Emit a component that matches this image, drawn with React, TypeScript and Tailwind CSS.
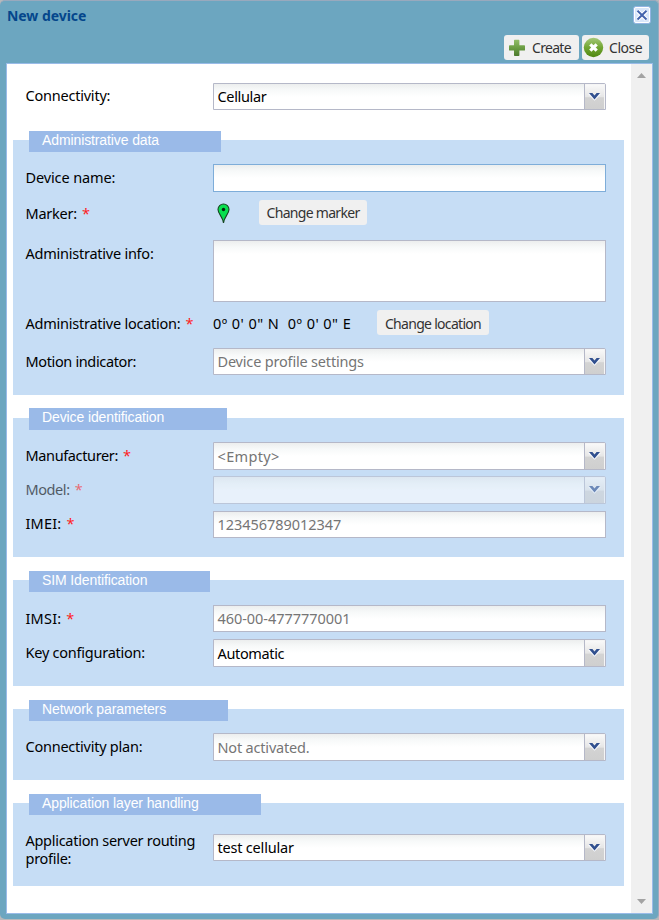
import React from "react";

const tahoma = "font-['Noto_Sans','Liberation_Sans',sans-serif]";

function Star() {
  return <span className="ml-[5px] text-[#ff2020]">*</span>;
}

function Row({ label, required, className = "", labelClass = "", children }: {
  label: React.ReactNode;
  required?: boolean;
  className?: string;
  labelClass?: string;
  children: React.ReactNode;
}) {
  return (
    <div className={`flex items-start ${className}`}>
      <div className={`w-[187.500px] shrink-0 whitespace-nowrap leading-[18px] ${labelClass || "pt-[4px] tracking-[-0.240px]"}`}>
        <span>{label}</span>
        {required && <Star />}
      </div>
      {children}
    </div>
  );
}

const fieldFill = "bg-white bg-[linear-gradient(#eceeee_0px,#f7f9f9_6px,#ffffff_13px)]";

function Field({ text, className = "h-[27px]", tone = "text-[#757575]", border = "border-[#b5b8c8]" }: {
  text?: React.ReactNode;
  className?: string;
  tone?: string;
  border?: string;
}) {
  return (
    <div className={`flex w-[393px] items-center whitespace-nowrap border pl-[3.500px] pt-px tracking-[-0.050px] ${fieldFill} ${border} ${tone} ${className}`}>
      {text}
    </div>
  );
}

function Select({ text, className = "h-[27px]", tone = "text-[#757575] tracking-[-0.180px]" }: {
  text?: React.ReactNode;
  className?: string;
  tone?: string;
}) {
  return (
    <div className={`flex w-[393px] overflow-hidden rounded-tr-[2px] border border-[#b5b8c8] ${fieldFill} ${className}`}>
      <div className={`flex flex-1 items-center whitespace-nowrap pl-[3.500px] pt-px ${tone}`}>{text}</div>
      <div className="flex w-[21px] border-l border-[#b5b8c8] bg-[linear-gradient(#fafafa,#e6e6e6_50%,#d3d3d3_55%,#cfcfcf)] pl-[3px] pt-[8px] shadow-[inset_-1px_1px_0_#f5f5f5]">
        <svg width="13" height="9" viewBox="0 0 13 9" className="shrink-0">
          <path d="M0 2h4l2.500 2L9 2h4L6.500 8.800z" fill="#f6f8fc" />
          <path d="M1 1h3.400l2.100 2.400L8.600 1H12L6.500 7.400z" fill="#31508f" />
        </svg>
      </div>
    </div>
  );
}

function Section({ title, className, legendClass, children }: {
  title: string;
  className: string;
  legendClass: string;
  children: React.ReactNode;
}) {
  return (
    <section className={`ml-[6px] flex w-[611px] flex-col bg-[#c6ddf5] pl-[12.500px] ${className}`}>
      <h2 className={`ml-[3.500px] shrink-0 bg-[#9abae8] pl-[13px] font-['Liberation_Sans',Arial,sans-serif] text-[14px] leading-[19px] tracking-[-0.110px] text-white ${legendClass}`}>
        {title}
      </h2>
      {children}
    </section>
  );
}

function Button({ children, className = "" }: { children: React.ReactNode; className?: string }) {
  return (
    <button className={`flex h-[25px] items-center whitespace-nowrap rounded-[3px] bg-[#f0f0f0] text-[14px] tracking-[-0.700px] text-[#333333] ${className}`}>
      {children}
    </button>
  );
}

export default function App() {
  return (
    <div className="h-[920px] w-[659px] bg-[#b7b9bb]">
      <div className={`flex h-[919px] w-[659px] flex-col rounded-[5px] border-t border-r border-[#99a9bd] bg-[#6ca6c0] text-[14.500px] text-black ${tahoma}`}>
        <header className="flex h-[34px] shrink-0 items-start justify-between pl-[7px] pr-[7px]">
          <h1 className="pt-[5px] text-[14px] font-bold leading-[20px] tracking-[-0.050px] text-[#04468c]">New device</h1>
          <svg width="18" height="18" viewBox="0 0 18 18" className="mt-[5px]">
            <rect x=".5" y=".5" width="17" height="17" rx="2.500" fill="#d8e6fa" stroke="#92b4e2" />
            <rect x="1.500" y="1.500" width="15" height="15" rx="1.500" fill="none" stroke="#fff" />
            <path d="M4.500 5l9 8.500M13.500 5l-9 8.500" stroke="#fff" strokeWidth="4" />
            <path d="M4.500 4.700l9 8.800M13.500 4.700l-9 8.800" stroke="#4464ad" strokeWidth="2" />
          </svg>
        </header>
        <div className="flex h-[28px] shrink-0 justify-end gap-[3px] pr-[9px]">
          <Button className="w-[75px] pl-[4px]">
            <svg width="18" height="18" viewBox="0 0 18 18">
              <defs>
                <linearGradient id="plus" x2="0" y2="1"><stop stopColor="#91bd68" /><stop offset=".5" stopColor="#6b9d43" /><stop offset="1" stopColor="#4b792d" /></linearGradient>
              </defs>
              <path d="M6 1.500q0-.7.7-.7h4q.7 0 .7.700v4.700h4.900q.7 0 .7.700v4q0 .7-.7.700h-4.900v4.700q0 .7-.7.700h-4q-.7 0-.7-.7v-4.700H1.700q-.7 0-.7-.7v-4q0-.7.7-.7H6z" fill="url(#plus)" />
            </svg>
            <span className="ml-[6px]">Create</span>
          </Button>
          <Button className="w-[67px] pl-[1px]">
            <svg width="21" height="21" viewBox="0 0 21 21">
              <defs>
                <linearGradient id="ball" x2="0" y2="1"><stop stopColor="#a5c878" /><stop offset=".5" stopColor="#72a633" /><stop offset="1" stopColor="#4f8710" /></linearGradient>
              </defs>
              <circle cx="10.500" cy="10.500" r="9.700" fill="url(#ball)" />
              <path d="M7.300 7.300l6.400 6.400M13.700 7.300l-6.400 6.400" stroke="#fff" strokeWidth="3.200" />
            </svg>
            <span className="ml-[5px] tracking-[-0.450px]">Close</span>
          </Button>
        </div>
        <div className="ml-[6px] flex h-[851px] w-[647px] shrink-0 border border-[#99bbe8] bg-white">
          <main className="flex w-[624px] shrink-0 flex-col">
            <Row label="Connectivity:" className="mt-[19px] h-[27px] pl-[18.500px]" labelClass="pt-[3px] tracking-[-0.220px]">
              <Select text="Cellular" tone="text-black tracking-[-0.350px]" />
            </Row>

            <Section title="Administrative data" className="mt-[30px] h-[255px]" legendClass="-mt-[9px] h-[21px] w-[192px]">
              <Row label="Device name:" className="mt-[12px] h-[28px]" labelClass="pt-[4px] tracking-[-0.120px]">
                <Field className="h-[28px]" border="border-[#7eadd9]" />
              </Row>
              <Row label="Marker:" required className="mt-[8px] h-[25px]">
                <svg width="14" height="21" viewBox="0 0 14 21" className="ml-[4px] mt-[3px]">
                  <path d="M6.500 20C6.300 14.500 1 11 1 6.500a5.500 5.500 0 0 1 11 0C12 11 6.700 14.500 6.500 20z" fill="#08df4e" stroke="#174522" strokeWidth="1.100" />
                  <circle cx="6.500" cy="6.500" r="1.700" fill="#06250d" />
                </svg>
                <Button className="ml-[28px] w-[108px] justify-center">Change marker</Button>
              </Row>
              <Row label="Administrative info:" className="mt-[15px] h-[62px]">
                <Field className="h-[62px]" />
              </Row>
              <Row label="Administrative location:" required className="mt-[8px] h-[25px]">
                <span className="w-[164px] whitespace-pre pt-[4px] leading-[18px] tracking-[0.450px]">{"0º 0' 0\" N  0º 0' 0\" E"}</span>
                <Button className="w-[112px] justify-center pt-px">Change location</Button>
              </Row>
              <Row label="Motion indicator:" className="mt-[13px] h-[27px]" labelClass="pt-[4px] tracking-[-0.360px]">
                <Select text="Device profile settings" />
              </Row>
            </Section>

            <Section title="Device identification" className="mt-[23px] h-[139px]" legendClass="-mt-[10px] h-[22px] w-[198px]">
              <Row label="Manufacturer:" required className="mt-[12px] h-[28px]" labelClass="pt-[4px] tracking-[-0.370px]">
                <Select text="<Empty>" className="h-[28px]" tone="text-[#757575] tracking-[0.350px]" />
              </Row>
              <Row label="Model:" required className="mt-[6px] h-[28px] opacity-60" labelClass="pt-[4px] tracking-[-0.420px]">
                <Select className="h-[28px]" />
              </Row>
              <Row label="IMEI:" required className="mt-[7px] h-[27px]" labelClass="pt-[3px] tracking-[0.200px]">
                <Field text="123456789012347" />
              </Row>
            </Section>

            <Section title="SIM Identification" className="mt-[23px] h-[106px]" legendClass="-mt-[9px] h-[21px] w-[181px]">
              <Row label="IMSI:" required className="mt-[13px] h-[27px]" labelClass="pt-[4px] tracking-[0.200px]">
                <Field text="460-00-4777770001" />
              </Row>
              <Row label="Key configuration:" className="mt-[7px] h-[28px]">
                <Select text="Automatic" tone="text-black tracking-[-0.350px]" className="h-[28px]" />
              </Row>
            </Section>

            <Section title="Network parameters" className="mt-[23px] h-[71px]" legendClass="-mt-[9px] h-[21px] w-[199px]">
              <Row label="Connectivity plan:" className="mt-[12px] h-[28px]">
                <Select text="Not activated." className="h-[28px]" />
              </Row>
            </Section>

            <Section title="Application layer handling" className="mt-[23px] h-[83px]" legendClass="-mt-[9px] h-[21px] w-[232px]">
              <Row label={<>Application server routing<br />profile:</>} className="mt-[19px] h-[27px]" labelClass="-mt-[3px] tracking-[-0.280px]">
                <Select text="test cellular" tone="text-black tracking-[-0.200px]" />
              </Row>
            </Section>
          </main>
          <div className="flex w-[21px] shrink-0 flex-col items-center justify-between bg-[#f0f0f0] pb-[9px] pt-[9px]">
            <svg width="9" height="5" viewBox="0 0 9 5"><path d="M0 5L4.500 0 9 5z" fill="#a3a3a3" /></svg>
            <svg width="9" height="5" viewBox="0 0 9 5"><path d="M0 0L4.500 5 9 0z" fill="#a3a3a3" /></svg>
          </div>
        </div>
      </div>
    </div>
  );
}
